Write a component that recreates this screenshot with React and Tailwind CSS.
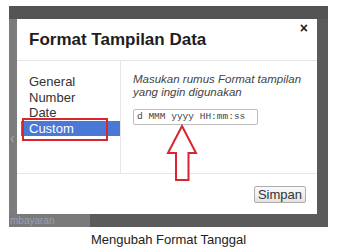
import React from 'react'

const items = ['General', 'Number', 'Date', 'Custom']

export default function App() {
  return (
    <div className="relative w-[337px] h-[247px] bg-white font-['Liberation_Sans',Arial,sans-serif] overflow-hidden">
      <div className="pt-[6px] pl-[9px]">
        <div className="w-[319px] h-[221px] bg-[#5b5b5b] flex flex-col">
          <div className="h-[13px] bg-[#545454]" />
          <div className="flex h-[195px]">
            <div className="w-[8px] bg-[#7c7c7c] flex flex-col">
              <div className="h-[112px]" />
              <div className="text-[#a9a9a9] text-[14px] leading-[14px] pl-[1px]">‹</div>
            </div>
            <div className="w-[300px] bg-white flex flex-col">
              <div className="h-[42px] border-b border-[#e6e6e6] flex items-start justify-between">
                <div className="pl-[12px] pt-[10px] text-[17px] leading-[22px] font-bold text-[#1e1e1e]">
                  Format Tampilan Data
                </div>
                <div className="pr-[9px] pt-[2px] text-[14px] leading-[14px] font-bold text-[#222]">×</div>
              </div>
              <div className="h-[113px] border-b border-[#e6e6e6] flex">
                <div className="w-[104px] border-r border-[#e6e6e6] pt-[13px] pl-[4px]">
                  {items.map((it) => (
                    <div
                      key={it}
                      className={`pl-[8px] text-[13px] leading-[15.5px] ${
                        it === 'Custom' ? 'bg-[#4a78d6] text-white' : 'text-[#333]'
                      }`}
                    >
                      {it}
                    </div>
                  ))}
                </div>
                <div className="flex-1 pl-[12px] pt-[12px]">
                  <div className="italic whitespace-nowrap text-[11.5px] leading-[13px] text-[#444]">
                    Masukan rumus Format tampilan
                    <br />
                    yang ingin digunakan
                  </div>
                  <div className="mt-[10px] w-[125px] h-[16px] border border-[#bdbdbd] rounded-[2px] pl-[3px] flex items-center font-['Liberation_Mono',monospace] text-[9.5px] text-[#444]">
                    d MMM yyyy HH:mm:ss
                  </div>
                </div>
              </div>
              <div className="flex-1 flex justify-end items-start pt-[12px] pr-[11px]">
                <button
                  type="button"
                  className="w-[52px] h-[17px] border border-[#adadad] rounded-[2px] bg-gradient-to-b from-[#fbfbfb] to-[#e3e3e3] text-[13px] leading-[15px] text-[#333]"
                >
                  Simpan
                </button>
              </div>
            </div>
            <div className="flex-1 bg-[#5a5a5a]" />
          </div>
          <div className="flex-1 flex">
            <div className="w-[81px] bg-[#7a7a7a] text-[10px] leading-[13px] text-[#9aa0b4] pl-[1px]">mbayaran</div>
          </div>
        </div>
      </div>
      <div className="text-center pt-[5px] text-[13px] leading-[16px] text-[#222]">Mengubah Format Tanggal</div>

      <div className="absolute left-[22px] top-[118px] w-[86px] h-[23px] border-2 border-[#d8262e]" />
      <svg className="absolute left-0 top-0" width="337" height="247" viewBox="0 0 337 247" fill="none">
        <path
          d="M182 126 L196 153 L188.5 153 L188.5 180 L176 180 L176 153 L168 153 Z"
          stroke="#d8262e"
          strokeWidth="2"
          strokeLinejoin="miter"
          fill="white"
        />
      </svg>
    </div>
  )
}
